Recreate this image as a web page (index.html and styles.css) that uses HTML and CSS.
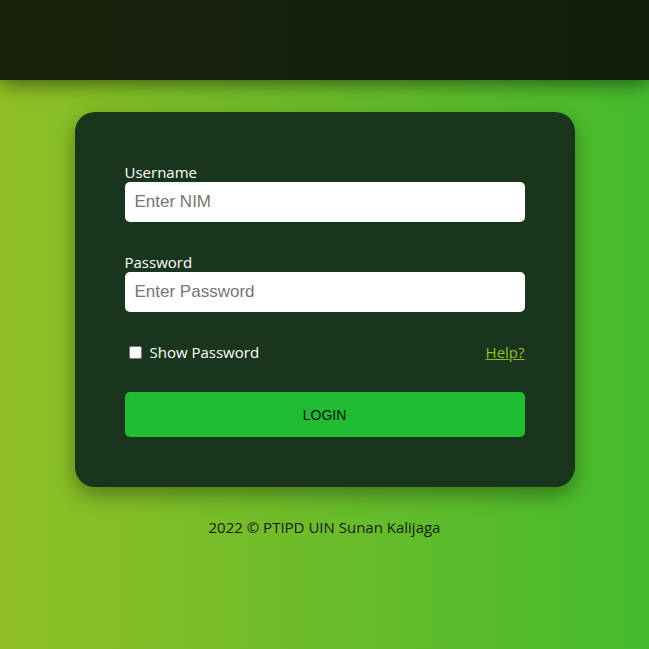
FILE: index.html
```html
<!DOCTYPE html>
<html>
<head>
<meta charset="utf-8">
<link rel="stylesheet" href="styles.css">
</head>
<body>
<header class="topbar"></header>
<main class="main">
  <form class="card">
    <label class="label" for="u">Username</label>
    <input class="input" id="u" type="text" placeholder="Enter NIM">
    <label class="label label-gap" for="p">Password</label>
    <input class="input" id="p" type="password" placeholder="Enter Password">
    <div class="row">
      <label class="check"><input type="checkbox" class="box"><span>Show Password</span></label>
      <a class="help" href="#">Help?</a>
    </div>
    <button class="btn" type="button">LOGIN</button>
  </form>
  <p class="footer">2022 © PTIPD UIN Sunan Kalijaga</p>
</main>
</body>
</html>
```
FILE: styles.css
```css
* { box-sizing: border-box; }
html, body { margin: 0; height: 100%; }
body {
  font-family: "Open Sans", sans-serif;
  background: linear-gradient(90deg, #8fbf25 0%, #6bbc2a 50%, #45bb2d 100%);
  overflow: hidden;
}
.topbar {
  height: 80px;
  background: linear-gradient(90deg, #1a230c, #121e0b);
  box-shadow: 0 4px 18px rgba(0,0,0,0.5);
  position: relative;
  z-index: 1;
}
.main {
  display: flex;
  flex-direction: column;
  align-items: center;
  padding-top: 32px;
}
.card {
  width: 500px;
  background: #19351c;
  border-radius: 20px;
  padding: 50px;
  display: flex;
  flex-direction: column;
  box-shadow: 0 8px 20px rgba(0,0,0,0.35);
}
.label {
  color: #fff;
  font-size: 15px;
  line-height: 20px;
}
.label-gap { margin-top: 30px; }
.input {
  height: 40px;
  border: none;
  border-radius: 5px;
  padding: 0 10px;
  font-family: "Liberation Sans", Arial, sans-serif;
  font-size: 17px;
  color: #333;
  background: #fff;
  outline: none;
}
.input::placeholder { color: #757575; }
.row {
  margin-top: 30px;
  height: 20px;
  display: flex;
  justify-content: space-between;
  align-items: center;
}
.check {
  color: #fff;
  font-size: 15px;
  display: flex;
  align-items: center;
  gap: 8px;
  padding-left: 4px;
}
.box {
  width: 13px;
  height: 13px;
  margin: 0;
}
.help {
  color: #8fbf25;
  font-size: 15px;
  text-decoration: underline;
}
.btn {
  margin-top: 30px;
  height: 45px;
  border: none;
  border-radius: 5px;
  background: #20bd33;
  color: #111;
  font-family: "Liberation Sans", Arial, sans-serif;
  font-size: 14px;
}
.footer {
  margin: 30px 0 0;
  font-size: 15px;
  line-height: 20px;
  color: #1a1a1a;
}
```
